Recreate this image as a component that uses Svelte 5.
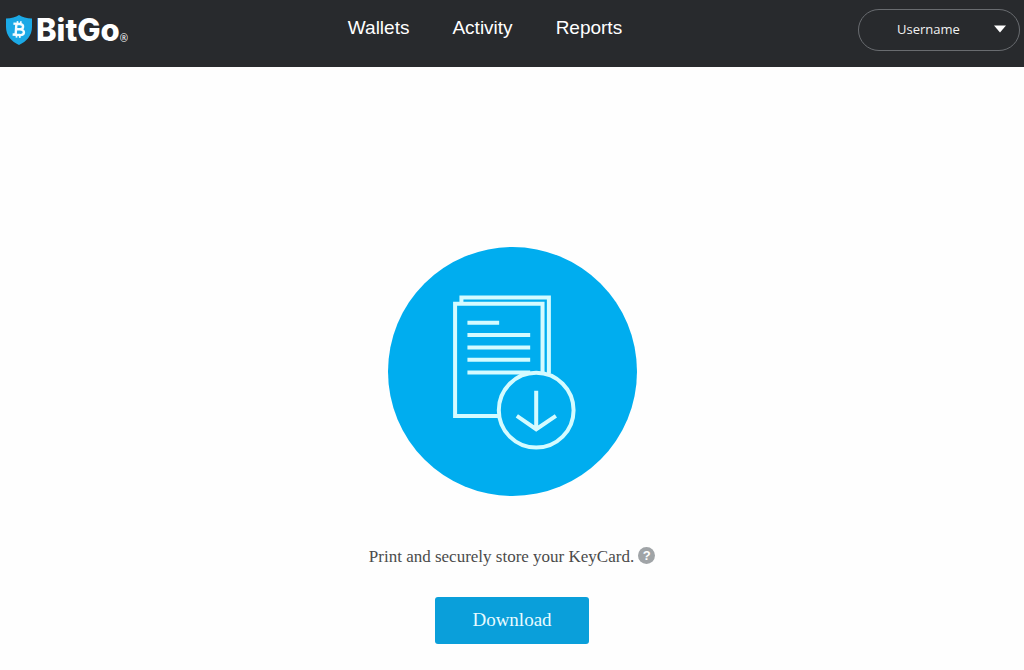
<script>
  const links = ['Wallets', 'Activity', 'Reports'];
</script>

<div class="page">
  <header>
    <a class="brand" href="#home">
      <svg class="shield" viewBox="0 0 26 30" aria-hidden="true">
        <path d="M13 0C9.500 2.400 5.500 3.300 0 3.500V12C0 20.500 5.500 26.500 13 30C20.500 26.500 26 20.500 26 12V3.500C20.500 3.300 16.500 2.400 13 0Z" fill="#1ba9e6" />
        <g transform="rotate(4 13 14.500)" fill="none" stroke="#f4fcff" stroke-width="2.400">
          <path d="M7 9H13.500C18 9 18 14.200 13.500 14.200H10.500M10 9V20M7 20H14C19.500 20 19.500 14.200 14 14.200" />
          <path d="M11 6.200V9M14.300 6.200V9M11 20V22.800M14.300 20V22.800" stroke-width="1.700" />
        </g>
      </svg>
      <span class="name">BitGo</span><span class="mark">®</span>
    </a>
    <nav aria-label="Main">
      {#each links as link}
        <a href={'#' + link.toLowerCase()}>{link}</a>
      {/each}
    </nav>
    <button class="account" type="button" aria-haspopup="menu">
      <span>Username</span>
      <svg viewBox="0 0 12 8" aria-hidden="true"><path d="M0 0.500H12L6 7.500Z" fill="#fff" /></svg>
    </button>
  </header>

  <main>
    <svg class="hero" viewBox="24 22 746 746" aria-hidden="true">
      <circle cx="397" cy="395" r="373" fill="#00adef" />
      <g fill="none" stroke="#d4fbff" stroke-width="12">
        <path d="M357 528H225V192H487V400" />
        <path d="M244 192V173H506V402" />
        <path d="M262 249H357M262 286H450M262 323H450M262 360H450M262 398H450" />
        <circle cx="468" cy="511" r="112" fill="#00adef" />
        <path d="M468 453V566M410 528L468 568L527 528" />
      </g>
    </svg>
    <p>
      Print and securely store your KeyCard.
      <button class="help" type="button" aria-label="About KeyCards">?</button>
    </p>
    <button class="download" type="button">Download</button>
  </main>
</div>

<style>
  :global(body) {
    margin: 0;
    background: #fefefe;
  }
  header {
    display: grid;
    grid-template-columns: 1fr auto 1fr;
    align-items: start;
    box-sizing: border-box;
    height: 67px;
    padding: 9px 4px 0 6px;
    background: #282a2d;
  }
  a {
    color: #fff;
    text-decoration: none;
  }
  .brand {
    display: flex;
    align-items: center;
    height: 42px;
    font-family: Inter, "Open Sans", sans-serif;
  }
  .shield {
    width: 26px;
    height: 30px;
  }
  .name {
    margin-left: 4px;
    font-size: 31px;
    font-weight: 800;
    line-height: 42px;
  }
  .mark {
    padding-top: 16px;
    font-family: "Open Sans", sans-serif;
    font-size: 10px;
    line-height: 16px;
  }
  nav {
    display: flex;
    gap: 43px;
    padding-right: 56px;
    font: 19px/38px "Liberation Sans", Arial, sans-serif;
  }
  .account {
    display: flex;
    justify-self: end;
    align-items: center;
    justify-content: space-between;
    box-sizing: border-box;
    width: 162px;
    height: 42px;
    padding: 0 13px 3px 38px;
    border: 1px solid #696c70;
    border-radius: 21px;
    background: transparent;
    color: #f1f1f1;
    font: 13px/20px "Open Sans", sans-serif;
  }
  .account svg {
    width: 12px;
    height: 8px;
  }
  main {
    display: flex;
    flex-direction: column;
    align-items: center;
    padding: 180px 16px 24px;
    font-family: "Liberation Serif", "Times New Roman", serif;
  }
  .hero {
    width: 249px;
    height: 249px;
  }
  p {
    display: flex;
    align-items: center;
    gap: 4px;
    margin: 49px 0 28px;
    color: #4b4b4b;
    font-size: 17px;
    line-height: 24px;
  }
  .help {
    width: 17px;
    height: 17px;
    margin-bottom: 4px;
    padding: 0;
    border: 0;
    border-radius: 50%;
    background: #a0a4a7;
    color: #fff;
    font: bold 13px/17px "Liberation Sans", Arial, sans-serif;
  }
  .download {
    width: 154px;
    height: 47px;
    padding: 0 0 2px;
    border: 0;
    border-radius: 3px;
    background: #0a9fda;
    color: #e8fbff;
    font: 19px/24px "Liberation Serif", "Times New Roman", serif;
  }
</style>
